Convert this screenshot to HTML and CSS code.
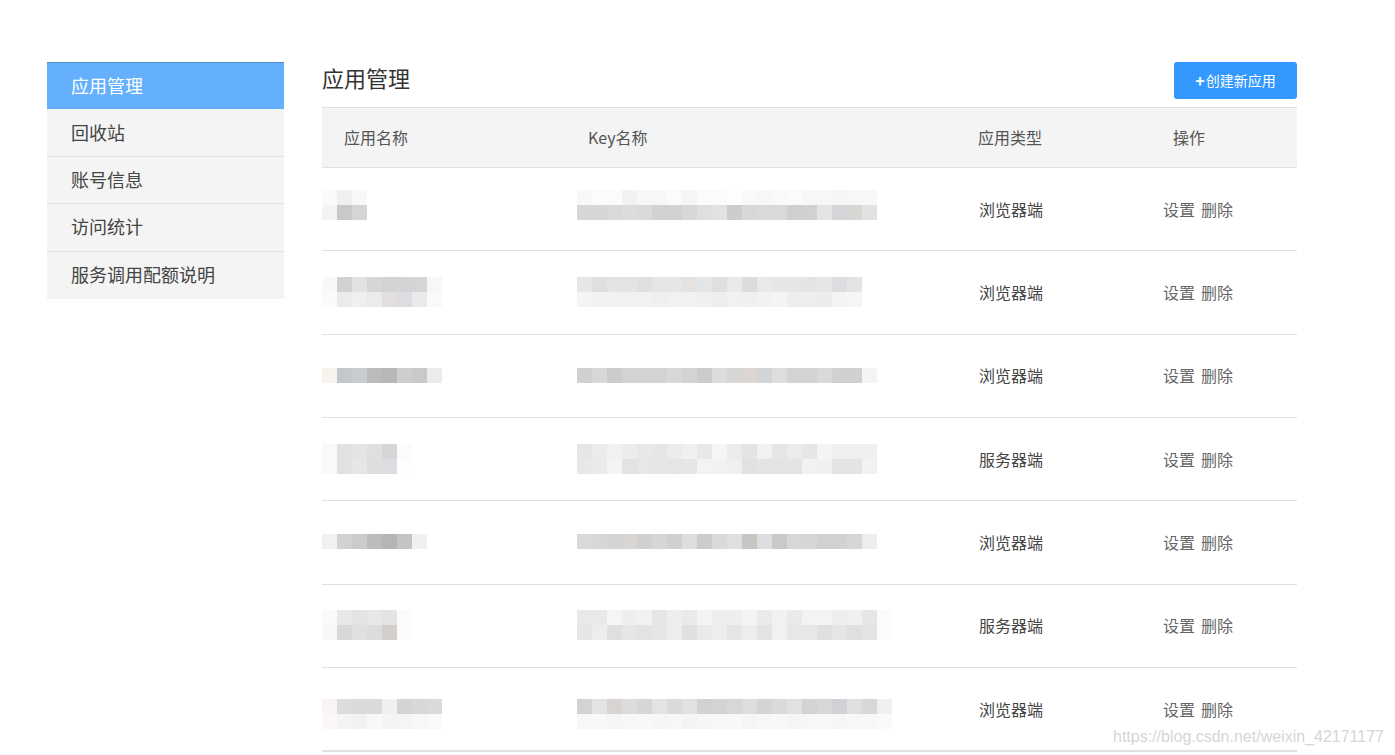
FILE: index.html
```html
<!DOCTYPE html>
<html lang="zh-CN">
<head>
<meta charset="utf-8">
<title>应用管理</title>
<link rel="stylesheet" href="styles.css">
</head>
<body>
<div class="page">
  <aside class="side">
    <a class="nav active">应用管理</a>
    <a class="nav">回收站</a>
    <a class="nav">账号信息</a>
    <a class="nav">访问统计</a>
    <a class="nav last">服务调用配额说明</a>
  </aside>
  <main class="main">
    <div class="head">
      <h1 class="title">应用管理</h1>
      <button class="btn"><b class="plus">+</b>创建新应用</button>
    </div>
    <div class="table">
      <div class="tr th">
        <div class="h1c">应用名称</div>
        <div class="h2c">Key名称</div>
        <div class="h3c">应用类型</div>
        <div class="h4c">操作</div>
      </div>
      <div class="tr">
        <div class="c1"><div class="blur two n1 up"></div></div>
        <div class="c2"><div class="blur two k1 up"></div></div>
        <div class="c3">浏览器端</div>
        <div class="c4"><span class="op">设置</span><span class="op">删除</span></div>
      </div>
      <div class="tr">
        <div class="c1"><div class="blur two n2"></div></div>
        <div class="c2"><div class="blur two k2"></div></div>
        <div class="c3">浏览器端</div>
        <div class="c4"><span class="op">设置</span><span class="op">删除</span></div>
      </div>
      <div class="tr">
        <div class="c1"><div class="blur one n3"></div></div>
        <div class="c2"><div class="blur one k3"></div></div>
        <div class="c3">浏览器端</div>
        <div class="c4"><span class="op">设置</span><span class="op">删除</span></div>
      </div>
      <div class="tr">
        <div class="c1"><div class="blur two n4"></div></div>
        <div class="c2"><div class="blur two k4"></div></div>
        <div class="c3">服务器端</div>
        <div class="c4"><span class="op">设置</span><span class="op">删除</span></div>
      </div>
      <div class="tr">
        <div class="c1"><div class="blur one n5"></div></div>
        <div class="c2"><div class="blur one k5"></div></div>
        <div class="c3">浏览器端</div>
        <div class="c4"><span class="op">设置</span><span class="op">删除</span></div>
      </div>
      <div class="tr">
        <div class="c1"><div class="blur two n6"></div></div>
        <div class="c2"><div class="blur two k6"></div></div>
        <div class="c3">服务器端</div>
        <div class="c4"><span class="op">设置</span><span class="op">删除</span></div>
      </div>
      <div class="tr">
        <div class="c1"><div class="blur two n7 down"></div></div>
        <div class="c2"><div class="blur two k7 down"></div></div>
        <div class="c3">浏览器端</div>
        <div class="c4"><span class="op">设置</span><span class="op">删除</span></div>
      </div>
    </div>
  </main>
</div>
<div class="watermark">https://blog.csdn.net/weixin_42171177</div>
</body>
</html>
```
FILE: styles.css
```css
* { box-sizing: border-box; }
html, body { margin: 0; padding: 0; background: #fff; }
body {
  font-family: "Noto Sans CJK SC", "Noto Sans", sans-serif;
  color: #333;
  overflow: hidden;
}
.page {
  display: flex;
  align-items: flex-start;
  padding: 62px 0 0 47px;
}
.side {
  width: 237px;
  flex: none;
  background: #f4f4f4;
  display: flex;
  flex-direction: column;
  margin-right: 38px;
}
.nav {
  display: flex;
  align-items: center;
  height: 47.4px;
  padding-left: 24px;
  padding-bottom: 2px;
  font-size: 18px;
  color: #444;
  border-bottom: 1px solid #e2e2e2;
}
.nav.last { border-bottom: none; }
.nav.active {
  background: #64b0fd;
  color: #fff;
  border-top: 1px solid #4f87c0;
  border-bottom: none;
}
.main {
  width: 975px;
  flex: none;
}
.head {
  display: flex;
  justify-content: space-between;
  align-items: flex-start;
  height: 45px;
}
.title {
  margin: 0;
  font-size: 22px;
  font-weight: normal;
  line-height: 30px;
  color: #333;
}
.btn {
  width: 123px;
  height: 37px;
  border: none;
  border-radius: 3px;
  background: #3399ff;
  color: #fff;
  font-family: "Noto Sans CJK SC", sans-serif;
  font-size: 14px;
  display: flex;
  align-items: center;
  justify-content: center;
  padding: 0 0 1px;
}
.plus { font-weight: bold; font-size: 16px; margin-right: 1px; }
.table {
  border-top: 1px solid #e0e0e0;
  border-bottom: 1px solid #dedede;
}
.tr {
  display: grid;
  grid-template-columns: 244px 390px 185px 156px;
  align-items: center;
  height: 83.33px;
  border-bottom: 1px solid #e0e0e0;
  font-size: 16px;
  padding-bottom: 1px;
}
.tr.th {
  height: 60px;
  background: #f4f4f4;
  color: #555;
  padding-bottom: 2px;
}
.h1c, .h2c, .h3c { padding-left: 22px; }
.h4c { padding-left: 32px; }
.c1 { padding-left: 0; display: flex; }
.c2 { padding-left: 11px; display: flex; }
.c3 { padding-left: 23px; color: #444; }
.c4 { padding-left: 22px; color: #666; display: flex; gap: 6px; }
.blur { flex: none; }
.blur.one { height: 15px; }
.blur.two { height: 30px; }
.blur.up { margin-bottom: 8px; }
.blur.down { margin-top: 10px; }

.n1 { width: 45px; background:
  linear-gradient(90deg, #fafafa 15px, #efefef 0 30px, #f8f8f8 0 45px) top/100% 15px no-repeat,
  linear-gradient(90deg, #f5f3f2 15px, #c8c9cb 0 30px, #d5d5d7 0 45px) bottom/100% 15px no-repeat; }
.k1 { width: 300px; background:
  linear-gradient(90deg, #f8f8f8 15px, #fbfbfb 0 30px, #fbfbfb 0 45px, #f2f2f2 0 60px, #f7f7f7 0 75px, #f7f7f7 0 90px, #fbfbfb 0 105px, #f5f5f5 0 120px, #fbfbfb 0 135px, #fbfbfb 0 150px, #fefefe 0 165px, #f9f9f7 0 180px, #f7f7f7 0 195px, #f9f9f9 0 210px, #fbfbfb 0 225px, #f7f7f7 0 240px, #f7f7f7 0 255px, #f5f7f6 0 270px, #f7f7f7 0 285px, #f7f7f7 0 300px) top/100% 15px no-repeat,
  linear-gradient(90deg, #d6d6d6 15px, #d6d6d6 0 30px, #d9d9d7 0 45px, #dcdcde 0 60px, #dadada 0 75px, #d2d2d2 0 90px, #d2d2d0 0 105px, #d8d8d8 0 120px, #dfdfdd 0 135px, #e2e2e2 0 150px, #cccccc 0 165px, #d8d8d8 0 180px, #d9dadc 0 195px, #dbd9d7 0 210px, #cfcfcf 0 225px, #d1d1d3 0 240px, #e4e4e2 0 255px, #d3d5d8 0 270px, #d8d6d3 0 285px, #e2e2e2 0 300px) bottom/100% 15px no-repeat; }

.n2 { width: 120px; background:
  linear-gradient(90deg, #f9f8f6 15px, #d0d1d3 0 30px, #e2e2e2 0 45px, #d6d6d6 0 60px, #d5d2d2 0 75px, #d3d4d6 0 90px, #d5d5d5 0 105px, #f6f7f9 0 120px) top/100% 15px no-repeat,
  linear-gradient(90deg, #fafafa 15px, #ebebeb 0 30px, #efefef 0 45px, #ebebeb 0 60px, #e2dfde 0 75px, #dcdde0 0 90px, #eaeaea 0 105px, #f8f9fb 0 120px) bottom/100% 15px no-repeat; }
.k2 { width: 285px; background:
  linear-gradient(90deg, #e6e6e4 15px, #dfdfdf 0 30px, #e4e4e4 0 45px, #e6e4e2 0 60px, #e0e0de 0 75px, #e4e5e7 0 90px, #e6e6e6 0 105px, #e6e2df 0 120px, #e4e5e7 0 135px, #dfdfdf 0 150px, #e8e9e9 0 165px, #dcdcda 0 180px, #e8e9e8 0 195px, #e6e6e6 0 210px, #e6e6e6 0 225px, #e4e4e2 0 240px, #e6e6e6 0 255px, #dcdde0 0 270px, #e4e4e4 0 285px) top/100% 15px no-repeat,
  linear-gradient(90deg, #f4f4f2 15px, #f2f2f2 0 30px, #f1f2f2 0 45px, #f0f1f1 0 60px, #f1f1f1 0 75px, #eeeff1 0 90px, #f0f1f1 0 105px, #f3f2f0 0 120px, #eeeff1 0 135px, #eeeeee 0 150px, #f1f1f1 0 165px, #f0f0f0 0 180px, #f2f2f2 0 195px, #f4f4f4 0 210px, #eeeeee 0 225px, #eeeeee 0 240px, #ececec 0 255px, #f4f4f4 0 270px, #f5f5f3 0 285px) bottom/100% 15px no-repeat; }

.n3 { width: 120px; background:
  linear-gradient(90deg, #f7f4ee 15px, #c5c8cb 0 30px, #cacdd0 0 45px, #bdbabb 0 60px, #b7b8b7 0 75px, #cdcfcd 0 90px, #c9cac8 0 105px, #ececee 0 120px); }
.k3 { width: 300px; background:
  linear-gradient(90deg, #d0d0d0 15px, #d8d8d8 0 30px, #cccccc 0 45px, #d4d3d1 0 60px, #d3d3d1 0 75px, #d3d3d1 0 90px, #d8d8da 0 105px, #d2d3d5 0 120px, #cccccc 0 135px, #dcdcdc 0 150px, #d6d6d6 0 165px, #dbd6d3 0 180px, #d3d4d8 0 195px, #dddddb 0 210px, #d3d3d3 0 225px, #d3d3d3 0 240px, #d9d9db 0 255px, #d1d1d1 0 270px, #d1d0ce 0 285px, #f4f4f6 0 300px); }

.n4 { width: 90px; background:
  linear-gradient(90deg, #fbf9f8 15px, #e1e2e4 0 30px, #e4e4e4 0 45px, #dfdfdf 0 60px, #d6d6d6 0 75px, #fafbfc 0 90px) top/100% 15px no-repeat,
  linear-gradient(90deg, #fbf9f8 15px, #e0e1e3 0 30px, #e6e7e5 0 45px, #dedede 0 60px, #dcdde0 0 75px, #fefefe 0 90px) bottom/100% 15px no-repeat; }
.k4 { width: 300px; background:
  linear-gradient(90deg, #e6e6e6 15px, #ebebeb 0 30px, #f2f1ef 0 45px, #ebecee 0 60px, #e8e8e8 0 75px, #e6e6e6 0 90px, #ebebe9 0 105px, #eff0f0 0 120px, #e8e8e8 0 135px, #f4f5f7 0 150px, #ebebe9 0 165px, #e4e4e4 0 180px, #f0f2f1 0 195px, #e6e6e6 0 210px, #eaebed 0 225px, #e6e6e6 0 240px, #f4f4f4 0 255px, #f0f0f0 0 270px, #f0f0f0 0 285px, #f0f0f0 0 300px) top/100% 15px no-repeat,
  linear-gradient(90deg, #e8e8e8 15px, #eaeaea 0 30px, #f4f4f4 0 45px, #e3e3e3 0 60px, #e6e7e7 0 75px, #e6e7e5 0 90px, #e5e5e5 0 105px, #e5e6e6 0 120px, #f4f3f1 0 135px, #f1f2f2 0 150px, #f0efed 0 165px, #e2e2e2 0 180px, #e4e4e4 0 195px, #e4e4e4 0 210px, #e3e4e4 0 225px, #f2f2f2 0 240px, #f0f0f0 0 255px, #e4e4e4 0 270px, #e4e4e4 0 285px, #f2f2f2 0 300px) bottom/100% 15px no-repeat; }

.n5 { width: 105px; background:
  linear-gradient(90deg, #f1f1ef 15px, #d0d3d1 0 30px, #cbcbcd 0 45px, #bcbcbc 0 60px, #b5b5b5 0 75px, #c4c5c3 0 90px, #eff0f2 0 105px); }
.k5 { width: 300px; background:
  linear-gradient(90deg, #dad9d7 15px, #d5d8d7 0 30px, #d4d3d5 0 45px, #d9d5d2 0 60px, #cfd0d2 0 75px, #d6d6d6 0 90px, #d0d0d0 0 105px, #dfdcdd 0 120px, #cccccc 0 135px, #d9d9d7 0 150px, #dfdfdf 0 165px, #c6c6c4 0 180px, #dcdde1 0 195px, #c9c9c7 0 210px, #d7d7d7 0 225px, #d6d6d8 0 240px, #d1d1cf 0 255px, #d3d2d0 0 270px, #d6d6d8 0 285px, #ededed 0 300px); }

.n6 { width: 90px; background:
  linear-gradient(90deg, #fafafa 15px, #e8e8ea 0 30px, #e3e4e6 0 45px, #e7e7e7 0 60px, #e4e4e2 0 75px, #fbfbfb 0 90px) top/100% 15px no-repeat,
  linear-gradient(90deg, #faf8f7 15px, #d7d8da 0 30px, #dfe0e2 0 45px, #dcdcdc 0 60px, #d2cfcc 0 75px, #f9fbfd 0 90px) bottom/100% 15px no-repeat; }
.k6 { width: 315px; background:
  linear-gradient(90deg, #e9e9e9 15px, #e9e9e9 0 30px, #f4f5f5 0 45px, #eeeeec 0 60px, #f1f1f3 0 75px, #e6e6e6 0 90px, #ededed 0 105px, #eaeae8 0 120px, #f3f4f6 0 135px, #ededed 0 150px, #eeeeee 0 165px, #f4f4f4 0 180px, #eaeae8 0 195px, #f1f1f1 0 210px, #e9eaec 0 225px, #f3f3f3 0 240px, #f3f3f3 0 255px, #ededed 0 270px, #f0f0f0 0 285px, #e6e6e6 0 300px, #fbfbfd 0 315px) top/100% 15px no-repeat,
  linear-gradient(90deg, #e6e6e6 15px, #ededed 0 30px, #dfdfdf 0 45px, #e6e6e4 0 60px, #e2e3e5 0 75px, #e6e6e6 0 90px, #ededed 0 105px, #e1e0de 0 120px, #e9eaec 0 135px, #ededed 0 150px, #e5e5e3 0 165px, #ededed 0 180px, #e3e3e3 0 195px, #f1f1f1 0 210px, #e8e7e5 0 225px, #e7e7e5 0 240px, #dfe0e2 0 255px, #e5e5e5 0 270px, #dfdfdd 0 285px, #e3e3e3 0 300px, #fafbfd 0 315px) bottom/100% 15px no-repeat; }

.n7 { width: 120px; background:
  linear-gradient(90deg, #f8f4f3 15px, #dcdcdc 0 30px, #dbd9da 0 45px, #d8dbd9 0 60px, #f0f0f0 0 75px, #d4d4d4 0 90px, #d8d8d8 0 105px, #dadada 0 120px) top/100% 15px no-repeat,
  linear-gradient(90deg, #faf7f6 15px, #f4f4f4 0 30px, #f2f2f2 0 45px, #f7f9f8 0 60px, #f4f4f4 0 75px, #f5f5f5 0 90px, #f7f7f7 0 105px, #f9f9f9 0 120px) bottom/100% 15px no-repeat; }
.k7 { width: 315px; background:
  linear-gradient(90deg, #d3d3d3 15px, #e3e4e4 0 30px, #d8d4d1 0 45px, #dcdcde 0 60px, #d6d6d6 0 75px, #e3e3e1 0 90px, #d8dadb 0 105px, #e1e1df 0 120px, #d2d2d2 0 135px, #d4d3d1 0 150px, #d6d7d9 0 165px, #dddddd 0 180px, #d5d4d2 0 195px, #dadada 0 210px, #e1e1e1 0 225px, #d3d3d3 0 240px, #d8d7d5 0 255px, #d1d2d6 0 270px, #dee0df 0 285px, #d7d7d7 0 300px, #efefef 0 315px) top/100% 15px no-repeat,
  linear-gradient(90deg, #f7f7f7 15px, #f8f8f8 0 30px, #f5f5f5 0 45px, #f7f7f7 0 60px, #f8f8f8 0 75px, #f6f6f6 0 90px, #f7f7f7 0 105px, #f4f4f4 0 120px, #f6f6f6 0 135px, #f7f7f7 0 150px, #f8f8f8 0 165px, #f5f5f5 0 180px, #f7f7f7 0 195px, #f8f8f8 0 210px, #f6f6f6 0 225px, #f7f7f7 0 240px, #f8f8f8 0 255px, #f6f6f6 0 270px, #f7f7f7 0 285px, #f8f8f8 0 300px, #fafafa 0 315px) bottom/100% 15px no-repeat; }

.watermark {
  position: absolute;
  left: 1113px;
  top: 727px;
  font-family: "Liberation Sans", Arial, sans-serif;
  font-size: 16px;
  line-height: 20px;
  color: #d6d6d6;
  white-space: nowrap;
}
```
